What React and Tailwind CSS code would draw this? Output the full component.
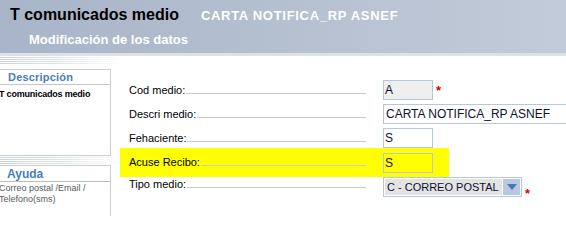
import React from 'react';

const font = { fontFamily: '"Liberation Sans", Arial, sans-serif' };

const Stripes = ({ className = '' }) => (
    <div className={`flex flex-col gap-[1px] w-[124px] ${className}`}>
        <div className="h-[1px] bg-linear-to-r from-[#c9d2e0] via-[#dde3ec] to-white" />
        <div className="h-[1px] bg-linear-to-r from-[#c9d2e0] via-[#dde3ec] to-white" />
        <div className="h-[1px] bg-linear-to-r from-[#c9d2e0] via-[#dde3ec] to-white" />
        <div className="h-[1px] bg-linear-to-r from-[#c9d2e0] via-[#dde3ec] to-white" />
    </div>
);

const Label = ({ text }) => (
    <div className="flex items-baseline w-[237px] text-[11px] text-black">
        <span className="leading-none">{text}</span>
        <div className="flex-1 h-[1px] bg-[#c4ccd8] ml-[1px]" />
    </div>
);

const Field = ({ value, className = '' }) => (
    <div className={`h-[20px] border border-[#b8c7dc] flex items-center pl-[1px] text-[12px] text-[#101030] whitespace-nowrap ${className}`}>
        {value}
    </div>
);

const Asterisk = () => <span className="text-[#e00000] text-[13px] font-bold ml-[3px] leading-none">*</span>;

export default function App() {
    return (
        <div className="w-[566px] h-[216px] overflow-hidden bg-white" style={font}>
            {/* Header */}
            <div className="h-[53px] bg-linear-to-r from-[#a8b4c8] to-[#c2cbd9]">
                <div className="flex items-baseline pl-[10px] pt-[6px] whitespace-nowrap">
                    <span className="text-[16px] font-bold text-black leading-[18px]">T comunicados medio</span>
                    <span className="text-[13px] font-bold text-white ml-[22px] tracking-[0.7px]">CARTA NOTIFICA_RP ASNEF</span>
                </div>
                <div className="pl-[29px] pt-[6px] text-[13px] font-bold text-white leading-[16px]">Modificación de los datos</div>
            </div>
            <div className="h-[3px] bg-[#dde2ea]" />

            <div className="flex">
                {/* Left panel */}
                <div className="w-[120px] flex flex-col">
                    <Stripes className="mt-[1px]" />
                    <div className="mt-[5px] w-[111px] h-[87px] border-t border-r border-b border-[#c9cdd5]">
                        <div className="h-[15px] border-b border-[#c2c6ce] pl-[8px] text-[11px] font-bold text-[#4a7cbf] leading-[15px] tracking-[0.2px]">Descripción</div>
                        <div className="-ml-[1px] pt-[3px] text-[9px] font-bold text-black leading-[12px] whitespace-nowrap tracking-[-0.2px]">T comunicados medio</div>
                    </div>
                    <Stripes className="mt-[1px]" />
                    <div className="mt-[1px] w-[111px] h-[60px] border-t border-r border-[#c9cdd5]">
                        <div className="h-[16px] border-b border-[#b8bcc4] pl-[7px] text-[12px] font-bold text-[#4a7cbf] leading-[16px]">Ayuda</div>
                        <div className="-ml-[1px] pt-[1px] text-[9px] text-[#5a5a5a] leading-[11px] whitespace-nowrap">
                            Correo postal /Email /<br />Telefono(sms)
                        </div>
                    </div>
                </div>

                {/* Form */}
                <div className="flex flex-col pt-[22px]">
                    <div className="flex items-center h-[24px] pl-[9px]">
                        <Label text="Cod medio:" />
                        <Field value="A" className="ml-[17px] w-[50px] bg-[#efefef]" />
                        <Asterisk />
                    </div>
                    <div className="flex items-center h-[24px] pl-[9px]">
                        <Label text="Descri medio:" />
                        <Field value="CARTA NOTIFICA_RP ASNEF" className="ml-[17px] w-[200px] pl-[2px] bg-white" />
                    </div>
                    <div className="flex items-center h-[24px] pl-[9px]">
                        <Label text="Fehaciente:" />
                        <Field value="S" className="ml-[17px] w-[50px] bg-white" />
                    </div>
                    <div className="flex items-center h-[29px] -mt-[2px] pl-[9px] w-[329px] bg-[#ffff00]">
                        <Label text="Acuse Recibo:" />
                        <Field value="S" className="ml-[17px] w-[50px] border-[#56752a] bg-[#ffff00]" />
                    </div>
                    <div className="flex items-start h-[24px] pl-[9px]">
                        <div className="pt-[2px]"><Label text="Tipo medio:" /></div>
                        <div className="ml-[17px] w-[139px] h-[20px] border border-[#b8c7dc] flex p-[1px]">
                            <div className="flex-1 bg-[#e3e3e3] flex items-center pl-[2px] text-[11px] text-[#101030] leading-none whitespace-nowrap">C - CORREO POSTAL</div>
                            <div className="w-[17px] ml-[1px] bg-[#b7c8e0] flex items-center justify-center">
                                <svg width="10" height="6" viewBox="0 0 10 6"><path d="M0 0H10L5 6Z" fill="#4876b6" /></svg>
                            </div>
                        </div>
                        <span className="mt-[4px]"><Asterisk /></span>
                    </div>
                </div>
            </div>
        </div>
    );
}
